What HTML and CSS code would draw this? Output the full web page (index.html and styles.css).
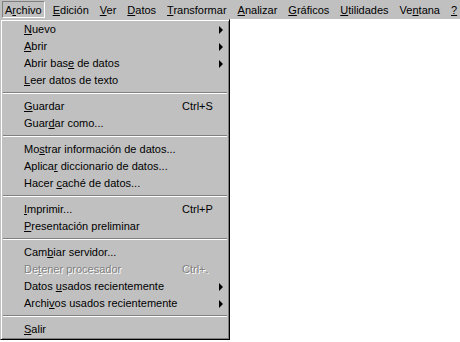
FILE: index.html
```html
<!DOCTYPE html>
<html lang="es">
<head>
    <meta charset="UTF-8">
    <title>Archivo</title>
    <link rel="stylesheet" href="styles.css">
</head>
<body>
    <div class="menubar">
        <span class="bar-item active">A<u>r</u>chivo</span>
        <span class="bar-item"><u>E</u>dición</span>
        <span class="bar-item"><u>V</u>er</span>
        <span class="bar-item"><u>D</u>atos</span>
        <span class="bar-item"><u>T</u>ransformar</span>
        <span class="bar-item"><u>A</u>nalizar</span>
        <span class="bar-item"><u>G</u>ráficos</span>
        <span class="bar-item"><u>U</u>tilidades</span>
        <span class="bar-item">Ve<u>n</u>tana</span>
        <span class="bar-item"><u>?</u></span>
    </div>

    <div class="menu">
        <div class="item"><span class="label"><u>N</u>uevo</span><span class="key"></span><span class="arrow"></span></div>
        <div class="item"><span class="label"><u>A</u>brir</span><span class="key"></span><span class="arrow"></span></div>
        <div class="item"><span class="label">Abrir bas<u>e</u> de datos</span><span class="key"></span><span class="arrow"></span></div>
        <div class="item"><span class="label"><u>L</u>eer datos de texto</span></div>
        <div class="sep"></div>
        <div class="item"><span class="label"><u>G</u>uardar</span><span class="key">Ctrl+S</span></div>
        <div class="item"><span class="label">Guar<u>d</u>ar como...</span></div>
        <div class="sep"></div>
        <div class="item"><span class="label">Mo<u>s</u>trar información de datos...</span></div>
        <div class="item"><span class="label">Aplica<u>r</u> diccionario de datos...</span></div>
        <div class="item"><span class="label">Hacer <u>c</u>aché de datos...</span></div>
        <div class="sep"></div>
        <div class="item"><span class="label"><u>I</u>mprimir...</span><span class="key">Ctrl+P</span></div>
        <div class="item"><span class="label"><u>P</u>resentación preliminar</span></div>
        <div class="sep"></div>
        <div class="item"><span class="label">Cam<u>b</u>iar servidor...</span></div>
        <div class="item disabled"><span class="label">De<u>t</u>ener procesador</span><span class="key">Ctrl+.</span></div>
        <div class="item"><span class="label">Datos <u>u</u>sados recientemente</span><span class="key"></span><span class="arrow"></span></div>
        <div class="item"><span class="label">Archi<u>v</u>os usados recientemente</span><span class="key"></span><span class="arrow"></span></div>
        <div class="sep"></div>
        <div class="item"><span class="label"><u>S</u>alir</span></div>
    </div>
</body>
</html>
```

FILE: styles.css
```css
body {
    margin: 0;
    background: #fff;
    font-family: "Liberation Sans", Arial, sans-serif;
    font-size: 11px;
    color: #000;
}

u {
    text-underline-offset: 1px;
}

.menubar {
    display: flex;
    height: 19px;
    padding: 1px 0 1px 2px;
    box-sizing: border-box;
    background: #c0c0c0;
}

.bar-item {
    height: 17px;
    line-height: 16px;
    padding: 0 2px;
    margin-right: 5px;
    border: 1px solid transparent;
    box-sizing: border-box;
    white-space: nowrap;
}

.bar-item.active {
    border-color: #808080 #fff #fff #808080;
}

.menu {
    width: 230px;
    box-sizing: border-box;
    padding: 1px;
    background: #c0c0c0;
    border: 1px solid;
    border-color: #c0c0c0 #000 #000 #c0c0c0;
    box-shadow: inset 1px 1px 0 #fff, inset -1px -1px 0 #808080;
}

.item {
    display: grid;
    grid-template-columns: 1fr 34px 12px;
    height: 17px;
    line-height: 17px;
    padding-left: 22px;
    white-space: nowrap;
}

.arrow {
    align-self: center;
    justify-self: start;
    margin-left: 3px;
    width: 0;
    height: 0;
    border-left: 4px solid #000;
    border-top: 4px solid transparent;
    border-bottom: 4px solid transparent;
}

.disabled {
    color: #808080;
    text-shadow: 1px 1px 0 #fff;
}

.sep {
    height: 0;
    margin: 3px 1px 4px;
    border-top: 1px solid #808080;
    border-bottom: 1px solid #fff;
}
```
